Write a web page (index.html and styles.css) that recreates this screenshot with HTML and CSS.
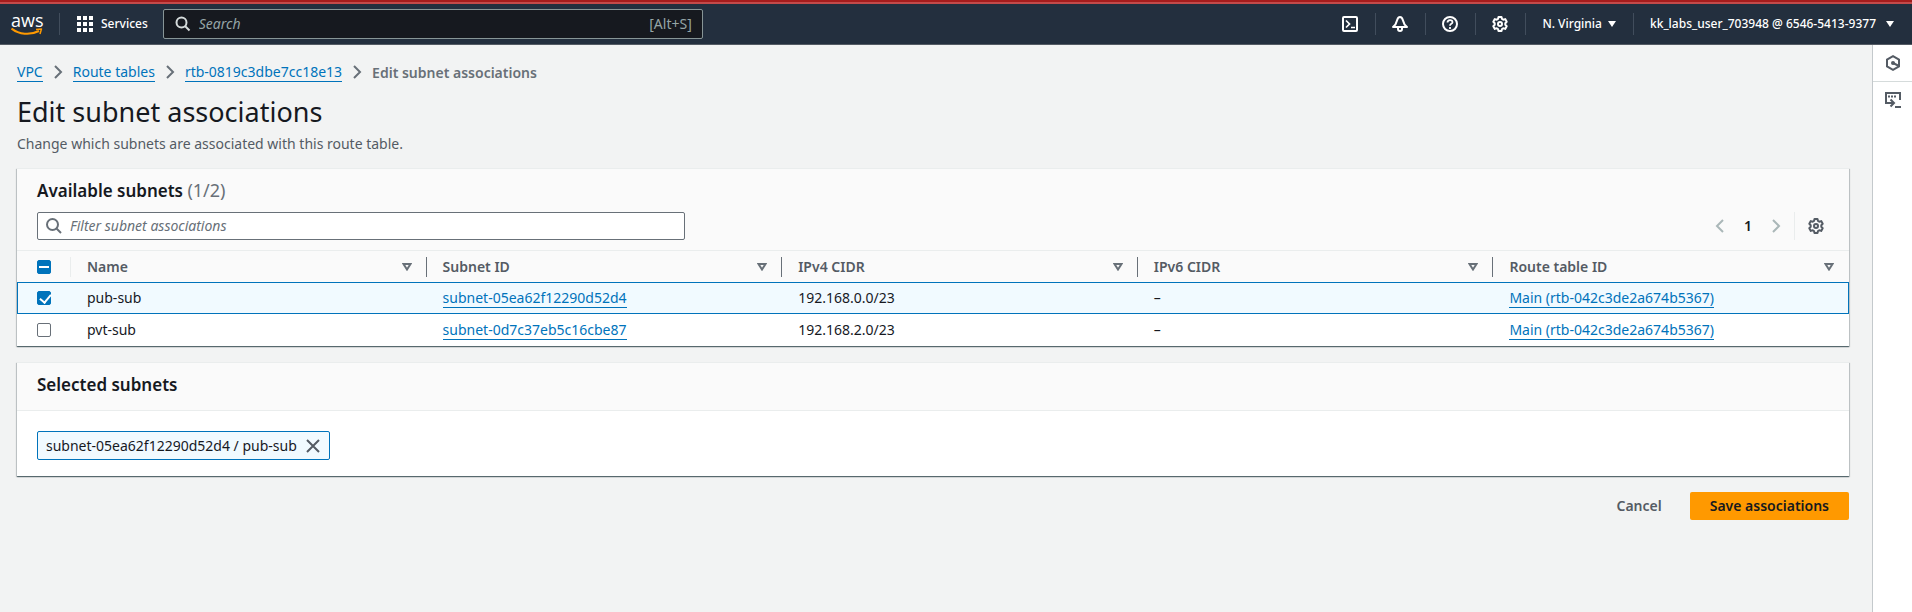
FILE: index.html
```html
<!DOCTYPE html>
<html lang="en">
<head>
<meta charset="utf-8">
<title>Edit subnet associations</title>
<link rel="stylesheet" href="styles.css">
</head>
<body>
<header class="topbar">
  <a class="logo" href="#" aria-label="AWS home">
    <span class="logo-text">aws</span>
    <svg class="logo-smile" viewBox="0 0 32 8" width="32" height="8"><path d="M0.500 0.500C8 6.500 19 7.500 28 3" fill="none" stroke="#ff9900" stroke-width="2"/><path d="M25 1.500L30.500 0.900L29 6" fill="none" stroke="#ff9900" stroke-width="1.500" stroke-linejoin="round"/></svg>
  </a>
  <button class="services" type="button">
    <svg viewBox="0 0 16 16" width="16" height="16" fill="#fff"><path d="M0 0h4v4H0zM6 0h4v4H6zM12 0h4v4h-4zM0 6h4v4H0zM6 6h4v4H6zM12 6h4v4h-4zM0 12h4v4H0zM6 12h4v4H6zM12 12h4v4h-4z"/></svg>
    <span>Services</span>
  </button>
  <label class="search">
    <svg viewBox="0 0 16 16" width="16" height="16" fill="none" stroke="#d5dbdb" stroke-width="2"><circle cx="6.500" cy="6.500" r="5"/><path d="M10 10l4.500 4.500"/></svg>
    <input type="text" placeholder="Search" aria-label="Search">
    <span>[Alt+S]</span>
  </label>
  <nav class="tools" aria-label="Account">
    <button type="button" aria-label="CloudShell"><svg viewBox="0 0 16 16" width="16" height="16" fill="none" stroke="#fff" stroke-width="2"><rect x="1" y="1" width="14" height="14" rx="1"/><path d="M4 4.500L7.500 8L4 11.500M9 11.500h4" stroke-width="1.700"/></svg></button>
    <button type="button" aria-label="Notifications"><svg viewBox="0 0 16 16" width="16" height="16" fill="none" stroke="#fff" stroke-width="2" stroke-linejoin="round"><path d="M8 1C6 1 5.500 2.500 5 4.500C4.500 7 3.500 9 1 11h14C12.500 9 11.500 7 11 4.500C10.500 2.500 10 1 8 1z"/><path d="M6 11.500v1.500a2 2 0 0 0 4 0v-1.500"/></svg></button>
    <button type="button" aria-label="Help"><svg viewBox="0 0 16 16" width="16" height="16" fill="none" stroke="#fff" stroke-width="2"><circle cx="8" cy="8" r="7"/><path d="M5.500 6.500C5.500 3.300 10.500 3.300 10.500 6.200C10.500 8 8 7.700 8 9.800M8 11v2" stroke-width="1.800"/></svg></button>
    <button type="button" aria-label="Settings"><svg viewBox="0 0 16 16" width="16" height="16" fill="none" stroke="#fff" stroke-width="2" stroke-linejoin="round"><path d="M6.500 1h3l.5 2 1.200.7 2-.6 1.500 2.600L13.300 7.200v1.600l1.400 1.500-1.500 2.600-2-.6L10 13l-.5 2h-3L6 13l-1.200-.7-2 .6-1.500-2.600L2.700 8.800V7.200L1.300 5.700l1.500-2.600 2 .6L6 3z"/><circle cx="8" cy="8" r="2"/></svg></button>
    <button type="button">N. Virginia <i class="caret"></i></button>
    <button type="button" class="account">kk_labs_user_703948 @ 6546-5413-9377 <i class="caret"></i></button>
  </nav>
</header>
<div class="shell">
  <main class="page">
    <nav class="crumbs" aria-label="Breadcrumb">
      <a class="link" href="#">VPC</a>
      <svg viewBox="0 0 16 16" width="16" height="16"><path d="M5 2l6 6-6 6"/></svg>
      <a class="link" href="#">Route tables</a>
      <svg viewBox="0 0 16 16" width="16" height="16"><path d="M5 2l6 6-6 6"/></svg>
      <a class="link" href="#">rtb-0819c3dbe7cc18e13</a>
      <svg viewBox="0 0 16 16" width="16" height="16"><path d="M5 2l6 6-6 6"/></svg>
      <span class="current">Edit subnet associations</span>
    </nav>
    <h1>Edit subnet associations</h1>
    <p class="intro">Change which subnets are associated with this route table.</p>

    <section class="panel">
      <div class="panel-head">
        <h2>Available subnets <span class="count">(1/2)</span></h2>
        <div class="controls">
          <label class="filter">
            <svg viewBox="0 0 16 16" width="16" height="16" fill="none" stroke="#687078" stroke-width="2"><circle cx="6.500" cy="6.500" r="5.500"/><path d="M10.500 10.500L15 15"/></svg>
            <input type="text" placeholder="Filter subnet associations" aria-label="Filter subnet associations">
          </label>
          <div class="pager">
            <button type="button" aria-label="Previous page"><svg viewBox="0 0 16 16" width="16" height="16"><path d="M11 2L5 8l6 6"/></svg></button>
            <button type="button" class="num">1</button>
            <button type="button" aria-label="Next page"><svg viewBox="0 0 16 16" width="16" height="16"><path d="M5 2l6 6-6 6"/></svg></button>
          </div>
          <button type="button" class="prefs" aria-label="Preferences"><svg viewBox="0 0 16 16" width="16" height="16" fill="none" stroke="#545b64" stroke-width="2" stroke-linejoin="round"><path d="M6.500 1h3l.5 2 1.200.7 2-.6 1.500 2.600L13.300 7.200v1.600l1.400 1.500-1.500 2.600-2-.6L10 13l-.5 2h-3L6 13l-1.200-.7-2 .6-1.500-2.600L2.700 8.800V7.200L1.300 5.700l1.500-2.600 2 .6L6 3z"/><circle cx="8" cy="8" r="2"/></svg></button>
        </div>
      </div>
      <table class="grid">
        <thead>
          <tr>
            <th class="pick"><input class="box some" type="checkbox" aria-label="Select all"></th>
            <th><div class="th">Name <svg class="sort" viewBox="0 0 10 8" width="10" height="8"><path d="M1.500 1h7L5 6.500z"/></svg></div></th>
            <th><div class="th">Subnet ID <svg class="sort" viewBox="0 0 10 8" width="10" height="8"><path d="M1.500 1h7L5 6.500z"/></svg></div></th>
            <th><div class="th">IPv4 CIDR <svg class="sort" viewBox="0 0 10 8" width="10" height="8"><path d="M1.500 1h7L5 6.500z"/></svg></div></th>
            <th><div class="th">IPv6 CIDR <svg class="sort" viewBox="0 0 10 8" width="10" height="8"><path d="M1.500 1h7L5 6.500z"/></svg></div></th>
            <th><div class="th">Route table ID <svg class="sort" viewBox="0 0 10 8" width="10" height="8"><path d="M1.500 1h7L5 6.500z"/></svg></div></th>
          </tr>
        </thead>
        <tbody>
          <tr class="selected">
            <td class="pick"><input class="box" type="checkbox" checked aria-label="Select pub-sub"></td>
            <td>pub-sub</td>
            <td><a class="link" href="#">subnet-05ea62f12290d52d4</a></td>
            <td>192.168.0.0/23</td>
            <td>–</td>
            <td><a class="link" href="#">Main (rtb-042c3de2a674b5367)</a></td>
          </tr>
          <tr>
            <td class="pick"><input class="box" type="checkbox" aria-label="Select pvt-sub"></td>
            <td>pvt-sub</td>
            <td><a class="link" href="#">subnet-0d7c37eb5c16cbe87</a></td>
            <td>192.168.2.0/23</td>
            <td>–</td>
            <td><a class="link" href="#">Main (rtb-042c3de2a674b5367)</a></td>
          </tr>
        </tbody>
      </table>
    </section>

    <section class="panel">
      <div class="panel-title"><h2>Selected subnets</h2></div>
      <div class="panel-body">
        <span class="token">subnet-05ea62f12290d52d4 / pub-sub
          <button type="button" aria-label="Remove"><svg viewBox="0 0 16 16" width="16" height="16"><path d="M2 2l12 12M14 2L2 14"/></svg></button>
        </span>
      </div>
    </section>

    <div class="actions">
      <button type="button" class="btn">Cancel</button>
      <button type="submit" class="btn primary">Save associations</button>
    </div>
  </main>
  <aside class="rail">
    <button type="button" aria-label="Diagnostics"><svg viewBox="0 0 16 16" width="16" height="16" fill="none" stroke="#545b64" stroke-width="2"><path d="M8 1.200l6 3.400v6.800l-6 3.400-6-3.400V4.600z"/><circle cx="8" cy="8" r="2" fill="#545b64" stroke="none"/><path d="M8 8l6 3"/></svg></button>
    <button type="button" aria-label="Terminal"><svg viewBox="0 0 16 16" width="16" height="16" fill="none" stroke="#545b64" stroke-width="2"><path d="M5 11H1V1h14v7M4 11h4M5.500 7.500L9 11l-3.500 3.500M10 15h6"/><path d="M3 4.500h2M6 4.500h2M9 4.500h2"/></svg></button>
  </aside>
</div>
</body>
</html>
```
FILE: styles.css
```css
* { box-sizing: border-box; }
body {
  margin: 0;
  min-height: 100vh;
  display: flex;
  flex-direction: column;
  background: #f2f3f3;
  color: #16191f;
  font: 14px/22px "Noto Sans", sans-serif;
}
button, input { font: inherit; color: inherit; }
button { background: none; border: 0; padding: 0; cursor: pointer; }
svg { display: block; flex: none; }
h1, h2, p { margin: 0; }
.link { color: #0073bb; text-decoration: none; border-bottom: 1px solid #0073bb; }

.topbar {
  display: flex;
  align-items: center;
  height: 45px;
  padding: 2px 0 0 11px;
  background: #232f3e;
  border-top: 2px solid #a51c1c;
  border-bottom: 1px solid #545b64;
  box-shadow: inset 0 2px #c34a4a;
  color: #fff;
  font-size: 12px;
  font-weight: 500;
}
.logo { width: 32px; color: #fff; text-decoration: none; }
.logo-text { display: block; font: 500 18px/14px "Open Sans", sans-serif; text-align: center; }
.logo-smile { margin-top: 1px; }
.services {
  display: flex;
  align-items: center;
  gap: 8px;
  height: 22px;
  margin-left: 16px;
  padding: 0 15px 0 17px;
  border-left: 1px solid #414d5c;
}
.search {
  display: flex;
  align-items: center;
  flex: 0 0 540px;
  height: 30px;
  padding: 0 10px 0 11px;
  border: 1px solid #879596;
  border-radius: 2px;
  background: #16191f;
  font-size: 14px;
  font-weight: 400;
}
.search input { flex: 1; min-width: 0; border: 0; padding: 0 8px; background: none; outline: 0; }
.search input::placeholder { color: #95a5a6; font-style: italic; opacity: 1; }
.search span { color: #95a5a6; }
.tools { display: flex; align-items: center; margin-left: auto; }
.tools button {
  display: flex;
  align-items: center;
  gap: 6px;
  height: 22px;
  padding: 0 17px 0 16px;
  border-left: 1px solid #414d5c;
}
.tools button:first-child { border-left: 0; }
.tools .account { gap: 10px; padding-right: 18px; }
.caret { border: 4px solid transparent; border-top: 6px solid #fff; border-bottom: 0; }

.shell { display: flex; flex: 1; }
.page { flex: 1; padding: 17px 23px 0 17px; }
.rail { width: 40px; background: #fff; border-left: 1px solid #c4c9cc; }
.rail button { display: flex; width: 100%; height: 37px; padding: 10px 12px; border-bottom: 1px solid #d5dbdb; }
.rail button + button { border-bottom: 0; }

.crumbs { display: flex; align-items: center; gap: 7px; line-height: 19px; }
.crumbs svg { fill: none; stroke: #687078; stroke-width: 2; }
.crumbs .current { color: #687078; font-weight: 600; }
h1 { margin-top: 12px; font-size: 27px; line-height: 36px; font-weight: 400; }
.intro { margin: 3px 0 13px; color: #545b64; }

.panel {
  margin-bottom: 16px;
  background: #fff;
  border-top: 1px solid #eaeded;
  box-shadow: 0 1px 1px rgba(0, 28, 36, .5), 1px 1px 1px rgba(0, 28, 36, .15), -1px 1px 1px rgba(0, 28, 36, .15);
}
h2 { font-size: 17px; line-height: 22px; font-weight: 600; }
.count { color: #687078; font-size: 18px; font-weight: 400; }
.panel-head { padding: 10px 20px; background: #fafafa; border-bottom: 1px solid #eaeded; }
.controls { display: flex; align-items: center; margin-top: 10px; }
.filter {
  display: flex;
  align-items: center;
  width: 648px;
  height: 28px;
  padding: 0 8px;
  background: #fff;
  border: 1px solid #687078;
  border-radius: 2px;
}
.filter input { flex: 1; border: 0; padding: 0 8px; background: none; outline: 0; }
.filter input::placeholder { color: #687078; font-style: italic; opacity: 1; }
.pager { display: flex; align-items: center; margin-left: auto; gap: 12px; padding-right: 10px; }
.pager svg { fill: none; stroke: #aab7b8; stroke-width: 2; }
.pager .num { width: 16px; font-weight: 600; }
.prefs { height: 28px; padding: 0 5px 0 13px; border-left: 1px solid #eaeded; }

.grid { width: 100%; table-layout: fixed; border-collapse: separate; border-spacing: 0; }
.grid th, .grid td { height: 32px; padding: 0 16px; text-align: left; }
.grid th { height: 31px; background: #fafafa; color: #545b64; font-weight: 600; padding-right: 0; }
.grid .pick { width: 54px; padding: 0 0 0 20px; }
.th {
  display: flex;
  align-items: center;
  justify-content: space-between;
  height: 20px;
  padding-right: 14px;
  border-right: 1px solid #687078;
}
.grid th:last-child .th { padding-right: 15px; border-right: 0; }
.grid th.pick { background: linear-gradient(#eaeded, #eaeded) right center / 1px 20px no-repeat #fafafa; }
.sort { fill: none; stroke: #687078; stroke-width: 2; }
.selected td { background: #f1faff; border: solid #0073bb; border-width: 1px 0; }
.grid .selected .pick { border-left-width: 1px; padding-left: 19px; }
.selected td:last-child { border-right-width: 1px; }
.box {
  appearance: none;
  display: block;
  width: 14px;
  height: 14px;
  margin: 0;
  border: 1px solid #687078;
  border-radius: 2px;
  background: #fff;
}
.box:checked, .box.some { border-color: #0073bb; background-color: #0073bb; }
.box:checked::after {
  content: "";
  display: block;
  width: 5px;
  height: 9px;
  margin: 0 0 0 4px;
  border: solid #fff;
  border-width: 0 2px 2px 0;
  transform: rotate(40deg);
}
.box.some::after { content: ""; display: block; width: 10px; height: 2px; margin: 5px 1px; background: #fff; }

.panel-title { padding: 11px 20px 14px; background: #fafafa; border-bottom: 1px solid #eaeded; }
.panel-body { display: flex; padding: 20px 20px 16px; }
.token {
  display: flex;
  align-items: center;
  gap: 8px;
  height: 29px;
  padding: 0 8px;
  background: #f1faff;
  border: 1px solid #0073bb;
  border-radius: 2px;
}
.token svg { fill: none; stroke: #545b64; stroke-width: 2; }
.actions { display: flex; justify-content: flex-end; gap: 8px; }
.btn { height: 28px; padding: 0 20px; border-radius: 2px; color: #545b64; font-weight: 600; }
.primary { background: #ff9900; color: #16191f; }
```
